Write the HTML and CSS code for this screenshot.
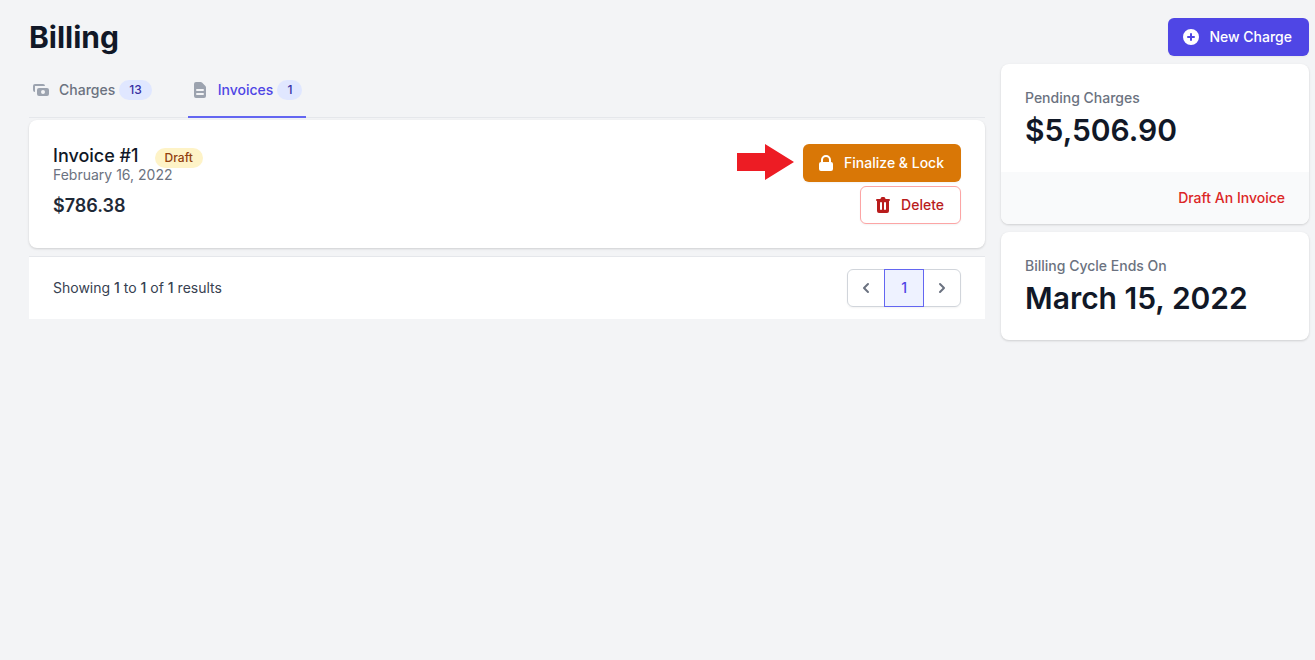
FILE: index.html
```html
<!DOCTYPE html>
<html lang="en">
<head>
    <meta charset="UTF-8">
    <meta name="viewport" content="width=device-width, initial-scale=1.0">
    <title>Billing</title>
    <link rel="stylesheet" href="styles.css">
</head>
<body>
    <div class="page">
        <header class="page-header">
            <h1>Billing</h1>
            <button type="button" class="btn btn-primary">
                <svg class="icon" viewBox="0 0 20 20" fill="currentColor" aria-hidden="true">
                    <path fill-rule="evenodd" clip-rule="evenodd" d="M10 18a8 8 0 100-16 8 8 0 000 16zm1-11a1 1 0 10-2 0v2H7a1 1 0 100 2h2v2a1 1 0 102 0v-2h2a1 1 0 100-2h-2V7z"/>
                </svg>
                New Charge
            </button>
        </header>

        <div class="layout">
            <main class="content">
                <nav class="tabs">
                    <a href="#charges" class="tab">
                        <svg class="icon" viewBox="0 0 20 20" fill="currentColor" aria-hidden="true">
                            <path fill-rule="evenodd" clip-rule="evenodd" d="M4 4a2 2 0 00-2 2v4a2 2 0 002 2V6h10a2 2 0 00-2-2H4zm2 6a2 2 0 012-2h8a2 2 0 012 2v4a2 2 0 01-2 2H8a2 2 0 01-2-2v-4zm6 4a2 2 0 100-4 2 2 0 000 4z"/>
                        </svg>
                        <span>Charges</span>
                        <span class="count">13</span>
                    </a>
                    <a href="#invoices" class="tab active" aria-current="page">
                        <svg class="icon" viewBox="0 0 20 20" fill="currentColor" aria-hidden="true">
                            <path fill-rule="evenodd" clip-rule="evenodd" d="M4 4a2 2 0 012-2h4.586A2 2 0 0112 2.586L15.414 6A2 2 0 0116 7.414V16a2 2 0 01-2 2H6a2 2 0 01-2-2V4zm2 6a1 1 0 011-1h6a1 1 0 110 2H7a1 1 0 01-1-1zm1 3a1 1 0 100 2h6a1 1 0 100-2H7z"/>
                        </svg>
                        <span>Invoices</span>
                        <span class="count">1</span>
                    </a>
                </nav>

                <article class="card invoice">
                    <div class="invoice-info">
                        <div class="invoice-title">
                            <h2>Invoice #1</h2>
                            <span class="status">Draft</span>
                        </div>
                        <p class="invoice-date">February 16, 2022</p>
                        <p class="invoice-amount">$786.38</p>
                    </div>
                    <div class="invoice-actions">
                        <div class="finalize">
                            <svg class="arrow" viewBox="0 0 57 36" aria-hidden="true">
                                <path d="M0 9h28V0l29 18-29 18v-9H0z"/>
                            </svg>
                            <button type="button" class="btn btn-warning">
                                <svg class="icon" viewBox="0 0 20 20" fill="currentColor" aria-hidden="true">
                                    <path fill-rule="evenodd" clip-rule="evenodd" d="M5 9V7a5 5 0 0110 0v2a2 2 0 012 2v5a2 2 0 01-2 2H5a2 2 0 01-2-2v-5a2 2 0 012-2zm8-2v2H7V7a3 3 0 016 0z"/>
                                </svg>
                                Finalize &amp; Lock
                            </button>
                        </div>
                        <button type="button" class="btn btn-danger">
                            <svg class="icon" viewBox="0 0 20 20" fill="currentColor" aria-hidden="true">
                                <path fill-rule="evenodd" clip-rule="evenodd" d="M9 2a1 1 0 00-.894.553L7.382 4H4a1 1 0 000 2v10a2 2 0 002 2h8a2 2 0 002-2V6a1 1 0 100-2h-3.382l-.724-1.447A1 1 0 0011 2H9zM7 8a1 1 0 012 0v6a1 1 0 11-2 0V8zm5-1a1 1 0 00-1 1v6a1 1 0 102 0V8a1 1 0 00-1-1z"/>
                            </svg>
                            Delete
                        </button>
                    </div>
                </article>

                <div class="pagination">
                    <p>Showing <strong>1</strong> to <strong>1</strong> of <strong>1</strong> results</p>
                    <nav class="pages" aria-label="Pagination">
                        <a href="#prev" class="page-link step" aria-label="Previous">
                            <svg class="icon" viewBox="0 0 20 20" fill="currentColor" aria-hidden="true">
                                <path fill-rule="evenodd" clip-rule="evenodd" d="M12.707 5.293a1 1 0 010 1.414L9.414 10l3.293 3.293a1 1 0 01-1.414 1.414l-4-4a1 1 0 010-1.414l4-4a1 1 0 011.414 0z"/>
                            </svg>
                        </a>
                        <a href="#page-1" class="page-link current" aria-current="page">1</a>
                        <a href="#next" class="page-link step" aria-label="Next">
                            <svg class="icon" viewBox="0 0 20 20" fill="currentColor" aria-hidden="true">
                                <path fill-rule="evenodd" clip-rule="evenodd" d="M7.293 14.707a1 1 0 010-1.414L10.586 10 7.293 6.707a1 1 0 011.414-1.414l4 4a1 1 0 010 1.414l-4 4a1 1 0 01-1.414 0z"/>
                            </svg>
                        </a>
                    </nav>
                </div>
            </main>

            <aside class="sidebar">
                <section class="card stat">
                    <div class="stat-body">
                        <h3>Pending Charges</h3>
                        <p class="stat-value">$5,506.90</p>
                    </div>
                    <div class="stat-footer">
                        <a href="#draft">Draft An Invoice</a>
                    </div>
                </section>
                <section class="card stat">
                    <div class="stat-body">
                        <h3>Billing Cycle Ends On</h3>
                        <p class="stat-value">March 15, 2022</p>
                    </div>
                </section>
            </aside>
        </div>
    </div>
</body>
</html>
```

FILE: styles.css
```css
* {
    box-sizing: border-box;
}
body {
    margin: 0;
    background: #f3f4f6;
    color: #111827;
    font-family: Inter, "Liberation Sans", sans-serif;
    font-size: 14px;
    line-height: 20px;
}
h1, h2, h3, p {
    margin: 0;
}
a {
    text-decoration: none;
}
.page {
    padding: 18px 6px 24px 29px;
}
.page-header {
    display: flex;
    align-items: center;
    justify-content: space-between;
    margin-bottom: 8px;
}
h1 {
    font-size: 30px;
    line-height: 36px;
    font-weight: 700;
}
.icon {
    width: 20px;
    height: 20px;
    flex-shrink: 0;
}

/* Buttons */
.btn {
    display: inline-flex;
    align-items: center;
    padding: 8px 16px;
    border: 1px solid transparent;
    border-radius: 6px;
    font: inherit;
    font-weight: 500;
    box-shadow: 0 1px 2px rgba(0, 0, 0, 0.05);
    cursor: pointer;
}
.btn .icon {
    margin-left: -4px;
    margin-right: 8px;
}
.btn-primary {
    background: #4f46e5;
    color: white;
}
.btn-primary:hover {
    background: #4338ca;
}
.btn-warning {
    background: #d97706;
    color: white;
}
.btn-warning:hover {
    background: #b45309;
}
.btn-danger {
    background: white;
    border-color: #fca5a5;
    color: #b91c1c;
}
.btn-danger:hover {
    background: #fef2f2;
}

/* Layout */
.layout {
    display: grid;
    grid-template-columns: repeat(4, minmax(0, 1fr));
    gap: 16px;
    align-items: start;
}
.content {
    grid-column: span 3;
}
.sidebar {
    display: grid;
    gap: 8px;
}
.card {
    background: white;
    border-radius: 8px;
    box-shadow: 0 1px 3px rgba(0, 0, 0, 0.1), 0 1px 2px rgba(0, 0, 0, 0.06);
}

/* Tabs */
.tabs {
    display: flex;
    gap: 32px;
    margin-bottom: 2px;
    border-bottom: 1px solid #e5e7eb;
}
.tab {
    display: flex;
    align-items: center;
    gap: 4px;
    margin-bottom: -1px;
    padding: 16px 4px;
    border-bottom: 2px solid transparent;
    color: #6b7280;
    font-weight: 500;
}
.tab.active {
    border-color: #6366f1;
    color: #4f46e5;
}
.tab .icon {
    margin-left: -2px;
    margin-right: 4px;
    color: #9ca3af;
}
.count,
.status {
    padding: 0 10px;
    border-radius: 10px;
    font-size: 12px;
    font-weight: 500;
}
.count {
    background: #e0e7ff;
    color: #3730a3;
}
.status {
    background: #fef3c7;
    color: #92400e;
}

/* Invoice */
.invoice {
    display: flex;
    justify-content: space-between;
    margin-bottom: 8px;
    padding: 24px;
}
.invoice-title {
    display: flex;
    align-items: flex-end;
    gap: 16px;
}
.invoice-title h2 {
    font-size: 18px;
    line-height: 24px;
    font-weight: 500;
}
.invoice-date {
    color: #6b7280;
    line-height: 14px;
}
.invoice-amount {
    margin-top: 12px;
    color: #1f2937;
    font-size: 18px;
    line-height: 24px;
    font-weight: 600;
}
.invoice-actions {
    display: flex;
    flex-direction: column;
    align-items: flex-end;
    gap: 4px;
}
.finalize {
    display: flex;
    align-items: flex-start;
    gap: 9px;
}
.arrow {
    width: 57px;
    height: 36px;
    fill: #ed1c24;
}

/* Pagination */
.pagination {
    display: flex;
    align-items: center;
    justify-content: space-between;
    padding: 12px 24px;
    border-top: 1px solid #e5e7eb;
    background: white;
    color: #374151;
}
.pagination strong {
    font-weight: 500;
}
.pages {
    display: flex;
    border-radius: 6px;
    box-shadow: 0 1px 2px rgba(0, 0, 0, 0.05);
}
.page-link {
    display: flex;
    padding: 8px 16px;
    border: 1px solid #d1d5db;
    font-weight: 500;
}
.page-link + .page-link {
    margin-left: -1px;
}
.page-link.step {
    padding: 8px;
    color: #6b7280;
}
.page-link:first-child {
    border-radius: 6px 0 0 6px;
}
.page-link:last-child {
    border-radius: 0 6px 6px 0;
}
.page-link.current {
    z-index: 1;
    background: #eef2ff;
    border-color: #6366f1;
    color: #4f46e5;
}

/* Stats */
.stat {
    overflow: hidden;
}
.stat-body {
    padding: 24px;
}
.stat h3 {
    color: #6b7280;
    font-size: 14px;
    font-weight: 500;
}
.stat-value {
    margin-top: 4px;
    font-size: 30px;
    line-height: 36px;
    font-weight: 600;
}
.stat-footer {
    padding: 16px 24px;
    background: #f9fafb;
    text-align: right;
}
.stat-footer a {
    color: #dc2626;
    font-weight: 500;
}
```
